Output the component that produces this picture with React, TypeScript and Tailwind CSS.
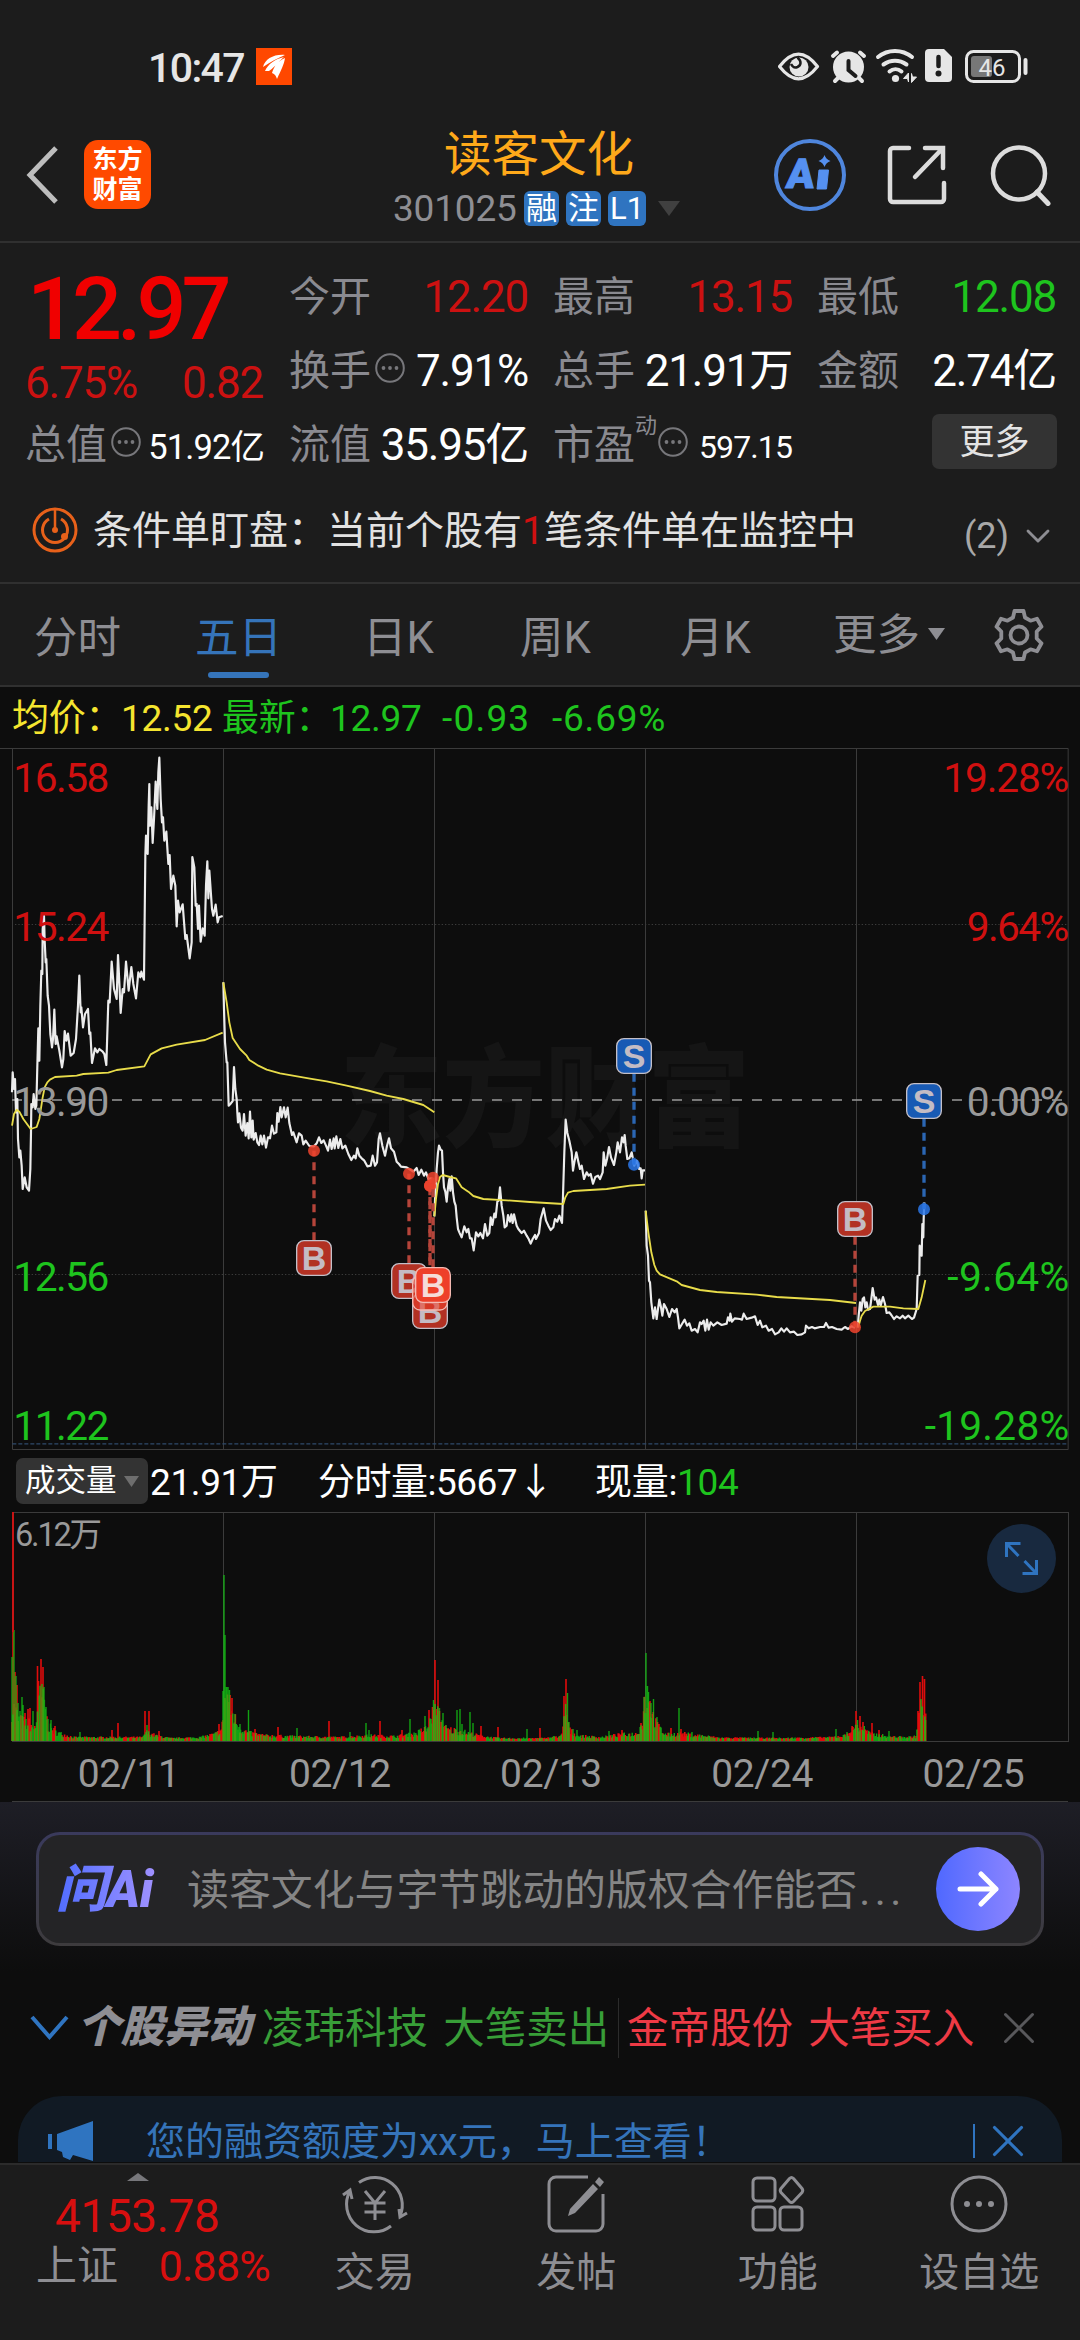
import { ReactNode } from "react";
import { ChevronDown, X } from "lucide-react";

const RED = "#d01010";
const GREEN = "#1ec41e";

/* ---------- status bar ---------- */

function StatusIcons() {
  return (
    <svg width="252" height="38" viewBox="778 47 252 38" fill="none" stroke="#e6e6e6">
      {/* eye */}
      <path d="M779.500 66.500C787 57 792.500 54.200 798.500 54.200s11.500 2.800 19 12.300c-7.500 9.500-13 12.300-19 12.300s-11.500-2.800-19-12.300z" strokeWidth="3.200" strokeLinejoin="round" />
      <circle cx="799" cy="67" r="9.500" fill="#e6e6e6" stroke="none" />
      <path d="M797.500 57.500c4.500 4 3.500 8 0 9.500-2.500 1-5 0-6.500-3" stroke="#1c1c1c" strokeWidth="2.500" />
      {/* alarm clock */}
      <circle cx="848.500" cy="67" r="15.500" fill="#e6e6e6" stroke="none" />
      <path d="M833 56l4-3.500M864 56l-4-3.500M838 78l-3 3M859 78l3 3" strokeWidth="4" strokeLinecap="round" />
      <path d="M848.500 61v9l7 6" stroke="#1c1c1c" strokeWidth="4" strokeLinecap="round" />
      {/* wifi */}
      <path d="M878 57c10-8 24-8 34 0M883.500 64.500c7-5 16-5 23 0M889.500 71.500c3.500-3 8.500-3 12 0" strokeWidth="4" strokeLinecap="round" />
      <circle cx="895.500" cy="78.500" r="3.600" fill="#e6e6e6" stroke="none" />
      <path d="M908.500 82v-9l-5 5.500h4zM911.500 73.500v9l5-5.500h-4z" strokeWidth="1" fill="#e6e6e6" />
      {/* sim warning */}
      <path d="M929 49h15l8 8v21a4 4 0 0 1-4 4h-19a4 4 0 0 1-4-4V53a4 4 0 0 1 4-4z" fill="#e6e6e6" stroke="none" />
      <path d="M938.500 57v9" stroke="#1c1c1c" strokeWidth="4.500" strokeLinecap="round" />
      <circle cx="938.500" cy="73.500" r="3" fill="#1c1c1c" stroke="none" />
      {/* battery */}
      <rect x="966.500" y="51.500" width="53" height="30" rx="7" strokeWidth="3" />
      <rect x="971" y="56" width="21" height="21" rx="3" fill="#777" stroke="none" />
      <path d="M1025.500 60v13" strokeWidth="4" strokeLinecap="round" />
      <text x="992" y="75.500" textAnchor="middle" fontSize="24" fontWeight="400" fill="#e6e6e6" stroke="none">46</text>
    </svg>
  );
}

function StatusBar() {
  return (
    <div className="flex h-[108px] items-start pt-[48px] pr-[50px] pl-[148px]">
      <span className="w-[108px] text-[41px] leading-[41px] font-medium tracking-[-1.600px] text-[#e6e6e6]">10:47</span>
      <svg width="36" height="37" viewBox="0 0 36 37">
        <rect width="36" height="37" fill="#ff4800" />
        <path d="M7 19C9 11 18 6 29 7c-7 3-15 7-22 12zM9 23c3-7 10-12 19-14-5 4-8 9-15 14zM16 25c2-7 6-12 13-15-1 7-4 12-8 21-1-3-2-5-5-6z" fill="#fff" />
      </svg>
      <div className="ml-auto -mt-px">
        <StatusIcons />
      </div>
    </div>
  );
}

/* ---------- title bar ---------- */

function Tag({ children }: { children: ReactNode }) {
  return (
    <span className="flex h-[35px] min-w-[35px] items-center justify-center rounded-[6px] bg-[#2f74c0] px-[2px] pt-px text-[31px] leading-none text-white">
      {children}
    </span>
  );
}

function Header() {
  return (
    <header className="flex h-[135px] items-center border-b-2 border-[#303030] pr-[28px] pl-[25px]">
      <svg width="35" height="60" viewBox="0 0 35 60" fill="none" stroke="#bdbdbd" strokeWidth="5">
        <path d="M31 3 5 30l26 27" />
      </svg>
      <div className="ml-[24px] flex h-[69px] w-[67px] flex-col items-center justify-center rounded-[14px] bg-[#ff4a00] text-[25px] leading-[30px] font-bold text-white">
        <span>东方</span>
        <span>财富</span>
      </div>
      <div className="ml-[242px] flex w-[292px] flex-col pt-[5px]">
        <h1 className="pl-[51px] text-[47.500px] leading-[58px] text-[#ffa91a]">读客文化</h1>
        <div className="mt-[4px] flex h-[40px] items-center gap-[7px]">
          <span className="w-[124px] pt-px text-[37px] tracking-[-0.2px] text-[#8e8e93]">301025</span>
          <Tag>融</Tag>
          <Tag>注</Tag>
          <Tag>L1</Tag>
          <svg className="ml-[5px]" width="22" height="15">
            <path d="M0 0h22L11 15z" fill="#404040" />
          </svg>
        </div>
      </div>
      <div className="ml-auto flex items-center">
        <svg width="74" height="74" viewBox="0 0 74 74">
          <circle cx="37" cy="37" r="34" fill="none" stroke="#4f86dd" strokeWidth="4" />
          <g transform="skewX(-6)">
            <text x="17.500" y="50" fontSize="41" fontWeight="900" fill="#5590f0" stroke="#5590f0">A</text>
          </g>
          <path d="M46 32h9.500l-2 19H44z" fill="#5590f0" strokeLinejoin="round" stroke="#5590f0" />
          <path d="M51.500 17q1.500 4.500 6 6-4.500 1.500-6 6-1.500-4.500-6-6 4.500-1.500 6-6z" fill="#5590f0" />
        </svg>
        <svg className="ml-[40px]" width="60" height="60" viewBox="0 0 60 60" fill="none" stroke="#dcdcdc" strokeWidth="4.500" strokeLinecap="round">
          <path d="M22 3H6a3 3 0 0 0-3 3v48a3 3 0 0 0 3 3h48a3 3 0 0 0 3-3V38M38 3h18v20M55 4 28 32" />
        </svg>
        <svg className="ml-[43px]" width="62" height="62" viewBox="0 0 62 62" fill="none" stroke="#dcdcdc" strokeWidth="4.500">
          <circle cx="29" cy="29.500" r="26" />
          <path d="m47 48 11 11.500" strokeWidth="5" strokeLinecap="round" />
        </svg>
      </div>
    </header>
  );
}

/* ---------- quote ---------- */

function Info() {
  return (
    <svg className="mx-[4px] mb-[7px] shrink-0" width="30" height="30" viewBox="0 0 30 30">
      <circle cx="15" cy="15" r="13.800" fill="none" stroke="#77777b" strokeWidth="2" />
      <g fill="#77777b">
        <circle cx="8.500" cy="15" r="1.900" />
        <circle cx="15" cy="15" r="1.900" />
        <circle cx="21.500" cy="15" r="1.900" />
      </g>
    </svg>
  );
}

interface CellProps {
  label: string;
  value: string;
  color?: string;
  info?: boolean;
  sup?: string;
  small?: string;
}

function Cell({ label, value, color = "text-white", info, sup, small }: CellProps) {
  return (
    <div className="flex h-[74px] w-[239px] items-center whitespace-nowrap">
      <span className="text-[41px] text-[#8a8a90]">{label}</span>
      {sup && <span className="-mr-[3px] mb-[38px] text-[22px] text-[#8a8a90]">{sup}</span>}
      {info && <Info />}
      <span
        className={
          small
            ? `ml-auto pt-[4px] tracking-[-0.9px] ${small} ${color}`
            : `ml-auto text-[44px] tracking-[-1.200px] ${color}`
        }
      >
        {value}
      </span>
    </div>
  );
}

function Quote() {
  return (
    <section className="flex h-[236px] gap-[25px] pt-[17px] pl-[25px]">
      <div className="w-[239px]">
        <div className="flex h-[98px] items-center pl-[2px] text-[88px] leading-none font-medium tracking-[-5px] text-[#f00000]">12.97</div>
        <div className="flex h-[50px] items-center justify-between pr-px text-[44px] tracking-[-1.200px] text-[#cc1111]">
          <span>6.75%</span>
          <span>0.82</span>
        </div>
        <Cell label="总值" info small="text-[34.500px]" value="51.92亿" />
      </div>
      <div>
        <Cell label="今开" value="12.20" color="text-[#cc1111]" />
        <Cell label="换手" info value="7.91%" />
        <Cell label="流值" value="35.95亿" />
      </div>
      <div>
        <Cell label="最高" value="13.15" color="text-[#cc1111]" />
        <Cell label="总手" value="21.91万" />
        <Cell label="市盈" sup="动" info small="text-[32px]" value="597.15" />
      </div>
      <div>
        <Cell label="最低" value="12.08" color="text-[#1ec41e]" />
        <Cell label="金额" value="2.74亿" />
        <button className="mt-[6px] ml-[115px] flex h-[55px] w-[125px] items-center justify-center rounded-[7px] bg-[#333] pt-[2px] text-[35px] text-[#e4e4e4]">
          更多
        </button>
      </div>
    </section>
  );
}

function AlertRow() {
  return (
    <div className="flex h-[105px] items-center border-b-2 border-[#303030] pr-[29px] pb-[2px] pl-[32px]">
      <svg width="46" height="46" viewBox="0 0 46 46" fill="none" stroke="#e8611a" strokeWidth="3">
        <circle cx="23" cy="23" r="21" />
        <path d="M17 12a12.500 12.500 0 1 0 12 0" />
        <path d="M23 2v20" strokeWidth="2.500" />
        <circle cx="23" cy="23" r="3" fill="#e8611a" stroke="none" />
        <circle cx="32.500" cy="29.500" r="3.500" fill="#e8611a" stroke="none" />
      </svg>
      <p className="mt-[3px] ml-[15px] text-[39px] whitespace-nowrap text-[#e2e2e2]">
        条件单盯盘：当前个股有<span className="text-[#d01010]">1</span>笔条件单在监控中
      </p>
      <span className="mt-[12px] ml-auto text-[36px] text-[#a8a8a8]">(2)</span>
      <ChevronDown className="mt-[12px] -mr-[7px] ml-[9px] h-[40px] w-[40px] text-[#8e8e93]" strokeWidth={1.700} />
    </div>
  );
}

/* ---------- period tabs ---------- */

const tabs = [
  { name: "分时", width: "w-[161px]" },
  { name: "五日", width: "w-[168px]", active: true },
  { name: "日K", width: "w-[157px]" },
  { name: "周K", width: "w-[160px]" },
  { name: "月K", width: "w-[153px]" },
];

function Tabs() {
  return (
    <nav className="flex h-[103px] items-center border-b-2 border-[#303030] pl-[34px] text-[43.500px] text-[#8e8e93]">
      {tabs.map((tab) => (
        <div key={tab.name} className={`${tab.width} flex h-full flex-col pt-[23px]`}>
          <span className={tab.active ? "leading-[64px] text-[#3574ba]" : "leading-[64px]"}>{tab.name}</span>
          {tab.active && <span className="mt-px ml-[13px] h-[6px] w-[61px] rounded-full bg-[#3574ba]" />}
        </div>
      ))}
      <span className="mt-[3px]">更多</span>
      <svg className="mb-[2px] ml-[8px]" width="17" height="12">
        <path d="M0 0h17L8.500 12z" fill="#8e8e93" />
      </svg>
      <svg className="ml-[48px]" width="52" height="54" viewBox="0 0 52 54" fill="none" stroke="#8e8e93" strokeWidth="3.800" strokeLinejoin="round">
        <path d="M21.500 3h9l1.500 6.500 5.500 3.200 6.500-2 4.500 8-4.800 4.800v7l4.800 4.800-4.500 8-6.500-2-5.500 3.200-1.500 6.500h-9L20 44.500l-5.500-3.200-6.500 2-4.500-8 4.800-4.800v-7l-4.800-4.800 4.500-8 6.500 2L20 9.500z" />
        <circle cx="26" cy="27" r="8.500" />
      </svg>
    </nav>
  );
}

/* ---------- price chart ---------- */

// Plot units are thirds of a pixel.
const priceLines = [
  {
    shift: "translate(0 0)",
    price:
      "36,1060 38,1000 42,1050 45,1020 48,1120 52,1080 54,1200 58,1255 61,1235 65,1280 68,1350 74,1315 80,1345 87,1355 91,1290 93,1180 94,1095 98,1105 101,1065 106,1110 109,1100 112,980 115,868 118,965 121,800 124,695 127,705 128,570 132,530 134,605 137,670 139,660 143,770 147,800 151,885 156,925 159,900 163,812 167,915 170,892 178,935 186,985 190,960 194,876 199,905 204,884 212,950 221,942 228,900 234,800 238,710 242,820 244,805 249,865 255,825 264,810 268,885 271,880 276,972 285,928 292,940 298,930 308,938 313,945 319,978 325,785 329,790 335,668 342,750 350,780 354,648 358,730 362,822 368,750 372,760 378,668 386,755 394,684 400,735 408,778 415,700 421,715 424,698 432,722 436,350 438,290 443,345 446,200 448,135 450,260 454,205 458,312 462,240 467,128 472,210 475,100 478,56 482,180 486,250 489,235 493,305 499,278 505,375 509,348 513,450 520,410 526,440 530,562 534,485 539,520 548,496 556,600 560,588 569,658 575,610 577,354 583,385 587,500 590,495 594,570 597,500 602,608 608,568 614,590 618,440 622,367 625,478 628,395 636,510 640,530 647,497 653,550 657,535 668,531",
    avg: "36,1160 42,1125 50,1112 58,1118 70,1140 92,1170 110,1164 118,1140 128,1075 134,1045 142,1030 150,1022 165,1014 230,1010 250,1005 325,1001 350,993 433,982 452,946 485,928 530,917 615,903 668,881",
  },
  {
    shift: "translate(660 720)",
    price:
      "10,10 12,90 15,190 20,250 22,250 26,380 32,374 38,366 42,264 46,330 50,360 52,400 54,430 58,403 63,446 68,455 72,405 77,470 82,432 86,478 90,398 94,475 98,425 101,482 107,462 112,490 117,498 122,470 127,496 132,470 138,506 144,475 150,478 156,440 162,464 169,460 172,402 176,428 181,384 185,415 192,385 197,415 203,386 208,432 216,468 220,460 230,490 237,463 245,470 250,496 257,485 268,501 282,502 290,493 297,475 304,492 311,484 318,500 324,515 330,482 335,510 341,478 344,508 349,472 355,507 361,480 367,508 376,500 385,525 394,543 402,530 407,538 412,508 418,530 425,538 433,545 442,562 452,560 458,530 465,560 471,550 476,480 480,463 487,500 495,530 501,500 507,478 513,508 522,518 530,548 537,555 543,563 560,565 580,578 590,567 596,588 604,572 612,590 618,580 625,600 632,598 640,600",
    avg: "10,10 20,70 28,130 38,177 60,210 80,230 88,243 115,260 140,272 180,283 270,299 320,307 380,320 450,336 500,350 550,360 610,378 643,400",
  },
  {
    shift: "translate(660 720)",
    price:
      "643,712 646,640 650,570 654,520 657,500 662,512 666,515 669,580 672,625 676,638 680,668 684,625 688,600 691,635 695,592 699,640 703,668 707,680 710,715 714,750 718,760 725,775 733,742 740,760 745,750 750,778 755,778 761,814 768,760 775,772 781,762 789,778 795,735 802,770 808,762 812,715 817,738 823,704 827,715 832,668 836,665 840,625 845,680 850,710 854,745 860,740 864,708 870,728 874,706 878,732 882,706 890,740 895,750 905,762 912,755 920,770 926,780 932,794 938,780 945,768 948,780 957,762 962,720 971,688 978,725 985,740 992,753 1000,745 1005,720 1012,728 1018,710 1026,732 1029,650 1033,520 1037,422 1042,462 1048,485 1055,520 1059,575 1063,550 1069,520 1075,548 1080,570 1085,560 1092,600 1100,580 1106,590 1112,585 1119,614 1126,594 1134,590 1140,600 1148,580 1151,520 1156,560 1161,540 1167,504 1173,535 1182,558 1189,520 1193,490 1200,520 1206,475 1211,490 1214,468 1217,500 1222,540 1228,538 1235,520 1243,560 1250,545 1257,570 1262,568 1265,598 1268,574 1275,574",
    avg: "643,712 648,660 654,615 660,594 668,588 690,594 708,598 725,625 745,638 760,651 790,660 860,664 930,669 1030,675 1036,655 1044,641 1060,636 1160,630 1230,620 1275,617",
  },
  {
    shift: "translate(1920 720)",
    price:
      "17,695 20,800 24,830 27,905 30,910 34,970 40,1018 45,985 50,1020 54,990 58,962 63,985 67,1010 72,975 80,990 88,1014 96,990 104,1000 110,990 114,1015 118,1048 126,1035 134,1022 141,1040 148,1033 155,1055 165,1050 173,1060 180,1030 185,1035 191,1025 196,1055 201,1022 206,1052 212,1030 220,1040 232,1030 245,1038 260,1034 264,1015 269,1025 271,1004 276,1028 284,1018 300,1020 306,1022 311,1004 320,1020 335,1016 345,1012 353,1038 360,1025 367,1045 378,1040 386,1055 396,1050 405,1066 416,1060 424,1048 432,1058 440,1048 450,1060 462,1058 472,1068 485,1066 495,1060 498,1040 506,1048 516,1044 524,1048 540,1044 552,1044 558,1032 566,1046 576,1044 590,1050 605,1052 615,1044 624,1050 634,1042 645,1046",
    avg: "17,695 25,760 34,820 43,858 50,875 60,886 110,907 125,918 180,933 230,939 350,947 410,954 570,963 648,972",
  },
  {
    shift: "translate(1920 720)",
    price:
      "653,1046 656,1010 660,970 664,995 668,960 672,955 676,985 680,970 684,992 690,990 694,960 698,927 704,962 708,955 714,978 718,962 722,980 729,954 735,975 740,1002 748,1000 754,1008 762,1020 770,1012 780,1018 788,1010 795,1018 805,1010 816,1020 822,1016 830,990 833,890 838,888 839,800 845,830 847,735 850,775 851,720 853,670",
    avg: "655,1045 660,1025 665,1010 675,996 700,983 750,983 790,988 835,990 845,955 856,903",
  },
];

interface TradeProps {
  kind: "B" | "S";
  x: number;
  dot: number;
  badge: number;
  bright?: boolean;
  plain?: boolean;
}

// Buy and sell marks: a dot on the line, a dashed stem and a lettered badge.
// A plain badge lies under another one, so its letter is left out.
const trades: TradeProps[] = [
  { kind: "B", x: 942, dot: 1235, badge: 1557 },
  { kind: "B", x: 1227, dot: 1304, badge: 1626 },
  { kind: "B", x: 1290, dot: 1340, badge: 1716 },
  { kind: "B", x: 1290, dot: 1340, badge: 1661, bright: true, plain: true },
  { kind: "B", x: 1299, dot: 1316, badge: 1638, bright: true },
  { kind: "S", x: 1902, dot: 1277, badge: 951 },
  { kind: "B", x: 2565, dot: 1765, badge: 1440 },
  { kind: "S", x: 2772, dot: 1411, badge: 1086 },
];

function Trade({ kind, x, dot, badge, bright, plain }: TradeProps) {
  const fill = kind === "S" ? "#185ab4" : bright ? "#ee402a" : "#b23123";
  const stem = kind === "S" ? "#2b66b3" : "#b5443a";
  const edge = badge > dot ? badge - 53 : badge + 53;
  return (
    <g>
      <path d={`M${x} ${edge}V${dot}`} stroke={stem} strokeWidth="10" strokeDasharray="24 18" />
      <circle cx={x} cy={dot} r="18" fill={kind === "S" ? "#2b78ea" : "#f0442e"} fillOpacity="0.85" />
      <rect
        x={x - 52}
        y={badge - 52}
        width="104"
        height="104"
        rx="22"
        fill={fill}
        fillOpacity={plain ? 0.6 : 1}
        stroke={bright ? "#f3b9b2" : "#c3bfc8"}
        strokeWidth="4"
      />
      {!plain && (
        <text x={x} y={badge + 37} textAnchor="middle" fontSize="102" fontWeight="700" fill={bright ? "#f5dcd9" : "#c4bcc4"} fontFamily="Liberation Sans, sans-serif">
          {kind}
        </text>
      )}
    </g>
  );
}

const priceLabels = [
  { y: 160, price: "16.58", pct: "19.28%", width: 378, fill: RED },
  { y: 606, price: "15.24", pct: "9.64%", width: 308, fill: RED },
  { y: 1132, price: "13.90", pct: "0.00%", width: 308, fill: "#999" },
  { y: 1657, price: "12.56", pct: "-9.64%", width: 366, fill: GREEN },
  { y: 2102, price: "11.22", pct: "-19.28%", width: 434, fill: GREEN },
];

function PriceChart() {
  return (
    <svg width="1080" height="704" viewBox="0 27 3240 2112" fill="none">
      <text x="1020" y="1196" fontSize="330" fontWeight="900" textLength="1230" lengthAdjust="spacingAndGlyphs" fill="#151515">
        东方财富
      </text>
      <g stroke="#3b3b3b" strokeWidth="3">
        <path d="M0 28.500H3204M37.500 28v2103M670.500 28v2103M1303.500 28v2103M1936.500 28v2103M2569.500 28v2103M3204.500 28v2103M37 2131.500H3205" />
        <path d="M45 556.500H3204M45 1606.500H3204" strokeDasharray="4 6" />
      </g>
      <path d="M37 2114.500H3200" stroke="#2f4a6b" strokeWidth="4" strokeDasharray="12 6" />
      <path d="M36 1083H3190" stroke="#999" strokeWidth="5" strokeDasharray="30 30" />
      {priceLines.map((day, i) => (
        <g key={i} transform={day.shift} strokeLinejoin="round">
          <polyline points={day.price} stroke="#ececec" strokeWidth="6.500" />
          <polyline points={day.avg} stroke="#e8dc4a" strokeWidth="5.500" />
        </g>
      ))}
      {trades.map((trade, i) => (
        <Trade key={i} {...trade} />
      ))}
      {priceLabels.map((row) => (
        <g key={row.price} fontSize="122" fill={row.fill}>
          <text x="40" y={row.y} textLength="288">{row.price}</text>
          <text x={3208 - row.width} y={row.y} textLength={row.width}>{row.pct}</text>
        </g>
      ))}
    </svg>
  );
}

/* ---------- volume chart ---------- */

// [x, height, colour] of the bars that stand out
const peaks: [number, number, "r" | "g"][] = [
  [12, 84, "g"], [13, 229, "r"], [14, 111, "g"], [15, 69, "r"], [16, 65, "g"], [17, 56, "r"], [18, 38, "g"],
  [20, 30, "g"], [22, 44, "g"], [23, 36, "g"], [25, 28, "r"], [28, 32, "r"], [30, 33, "r"], [33, 30, "g"], [37.500, 75, "r"],
  [38.500, 60, "r"], [41, 82, "r"], [43, 74, "r"], [42, 57, "g"], [44, 54, "g"], [46, 34, "g"], [48, 22, "g"], [51, 21, "g"],
  [55, 15, "r"], [80, 9, "g"], [112, 11, "r"], [118, 18, "r"], [145, 30, "r"], [149, 30, "r"], [147, 16, "g"], [159, 10, "r"],
  [219, 17, "r"], [223, 50, "g"], [224, 166, "g"], [225, 106, "g"], [226.500, 54, "g"], [228, 54, "g"], [229.500, 51, "g"],
  [232, 43, "r"], [235, 27, "g"], [240, 17, "g"], [248.500, 31, "g"], [255, 12, "r"], [278, 14, "r"], [297, 13, "g"],
  [329, 20, "r"], [350, 9, "g"], [366, 18, "g"], [369, 11, "g"], [380, 20, "r"], [402, 11, "r"], [410, 22, "g"], [425, 25, "g"],
  [429, 31, "r"], [431, 22, "g"], [433.500, 41, "g"], [435, 81, "r"], [438, 61, "r"], [439.500, 33, "g"], [443, 28, "g"],
  [446, 16, "g"], [457, 31, "g"], [460, 32, "g"], [462, 17, "g"], [470, 29, "g"], [473, 18, "g"], [481, 15, "r"], [498, 14, "r"],
  [527, 12, "g"], [540, 13, "r"], [564, 45, "r"], [566, 62, "r"], [567.500, 48, "g"], [569, 19, "g"], [573, 12, "g"], [577, 11, "g"],
  [609, 10, "g"], [622, 11, "r"], [641, 18, "r"], [644, 44, "g"], [646, 88, "g"], [647.500, 55, "g"], [648.500, 49, "g"],
  [650, 40, "r"], [651, 38, "g"], [653.500, 42, "g"], [657, 24, "g"], [659, 17, "r"], [671, 13, "r"], [679, 33, "g"], [681, 12, "r"],
  [692, 9, "g"], [758, 10, "g"], [773, 9, "g"], [836, 12, "g"], [847, 9, "g"], [852, 13, "r"], [856, 30, "r"], [857.500, 21, "g"],
  [860, 25, "r"], [863, 19, "r"], [872, 18, "r"], [879, 11, "r"], [889, 10, "g"], [918, 30, "r"], [920, 59, "r"], [922.500, 65, "r"],
  [924.500, 62, "r"], [921, 42, "g"], [925.500, 21, "g"],
];

// average height of the ordinary bars along the axis
const base = [
  [12, 40], [20, 22], [30, 18], [36, 14], [38, 50], [44, 44], [48, 16], [56, 9], [64, 6], [74, 3], [110, 3], [143, 3], [146, 9],
  [156, 5], [170, 2], [200, 3], [216, 7], [222, 12], [224, 50], [228, 46], [234, 26], [240, 14], [248, 8], [265, 5], [290, 4], [340, 3],
  [370, 5], [395, 4], [415, 7], [428, 14], [434, 34], [440, 26], [446, 12], [462, 10], [470, 7], [484, 4], [500, 2], [545, 2],
  [562, 5], [566, 40], [569, 12], [576, 5], [600, 3], [620, 6], [636, 7], [642, 18], [645, 48], [650, 36], [657, 16], [666, 6],
  [682, 7], [700, 5], [720, 2.5], [780, 2], [830, 3], [845, 5], [855, 15], [863, 14], [870, 7], [890, 4], [905, 3], [916, 4],
  [920, 36], [926, 24],
];

function baseAt(x: number) {
  const i = base.findIndex(([bx]) => bx >= x);
  if (i <= 0) return base[0][1];
  const [x0, y0] = base[i - 1];
  const [x1, y1] = base[i];
  return y0 + ((y1 - y0) * (x - x0)) / (x1 - x0);
}

function buildBars() {
  let seed = 7;
  const rand = () => {
    seed = (seed * 16807) % 2147483647;
    return seed / 2147483647;
  };
  const paths = { r: "", g: "" };
  for (let x = 12; x < 926; x += 0.876) {
    const height = baseAt(x) * (0.45 + rand() * 0.75) + 1;
    paths[rand() > 0.5 ? "r" : "g"] += `M${x.toFixed(1)} 229v-${height.toFixed(1)}`;
  }
  for (const [x, height, color] of peaks) {
    paths[color] += `M${x} 229v-${height}`;
  }
  return paths;
}

const bars = buildBars();

function VolumeChart() {
  return (
    <svg width="1080" height="232" viewBox="0 0 1080 232" fill="none">
      <path d="M12 .5h1056M223.500 0v230M434.500 0v230M645.500 0v230M856.500 0v230M1068.500 0v230M12 229.500h1056" stroke="#3b3b3b" />
      <path d={bars.r} stroke="#e00c0c" strokeWidth="1.600" />
      <path d={bars.g} stroke="#14c814" strokeWidth="1.400" strokeOpacity="0.8" />
      <path d="M13 0v120" stroke="#c81414" strokeWidth="2" />
      <text x="15" y="33.500" fontSize="32.500" textLength="87" fill="#999">6.12万</text>
      <circle cx="1021.500" cy="46.500" r="34.500" fill="#18293f" />
      <path d="M1006.500 45v-13.500h14M1007 32l11.500 12M1036.500 48v13.500h-14M1036 61l-11.500-12" stroke="#2f74c0" strokeWidth="3" />
    </svg>
  );
}

function Charts() {
  return (
    <section className="bg-[#0d0d0d]">
      <div className="flex h-[61px] items-center pt-[2px] pl-[12px] text-[37px] tracking-[-0.3px] whitespace-nowrap text-[#1ec41e]">
        <span className="w-[109px] text-[#f5e52f]">均价：</span>
        <span className="w-[101px] text-[#f5e52f]">12.52</span>
        <span className="w-[108px]">最新：</span>
        <span className="w-[112px]">12.97</span>
        <span className="w-[110px] tracking-[1.200px]">-0.93</span>
        <span className="tracking-[0.8px]">-6.69%</span>
      </div>
      <PriceChart />
      <div className="-mt-[3px] flex h-[63px] items-center pl-[16px] text-[37px] whitespace-nowrap text-white">
        <div className="flex h-[46px] w-[132px] items-center rounded-[7px] bg-[#333] pt-px pl-[9px] text-[30.500px]">
          成交量
          <svg className="ml-[7px]" width="15" height="11">
            <path d="M0 0h15L7.500 11z" fill="#6e6e6e" />
          </svg>
        </div>
        <span className="ml-[2px] w-[168px] pt-[3px] tracking-[-0.4px]">21.91万</span>
        <span className="w-[277px] pt-[3px] tracking-[-0.5px]">分时量:5667↓</span>
        <span className="pt-[3px] tracking-[-0.3px]">
          现量:<span className="text-[#1ec41e]">104</span>
        </span>
      </div>
      <VolumeChart />
      <div className="ml-[12px] grid h-[58px] w-[1056px] grid-cols-5 border-b border-[#3b3b3b] text-[39px] leading-[60px] text-[#999]">
        {["02/11", "02/12", "02/13", "02/24", "02/25"].map((date) => (
          <span key={date} className="pl-[22px] text-center tracking-[-0.4px]">{date}</span>
        ))}
      </div>
    </section>
  );
}

/* ---------- below the charts ---------- */

function AskBar() {
  return (
    <section className="flex h-[170px] flex-col bg-linear-to-b from-[#1e1e26] to-[#0d0d0d] px-[36px] pt-[30px]">
      <div className="rounded-[24px] bg-linear-to-b from-[#3a3a5c] to-[#3d3b3d] p-[3px]">
        <div className="flex h-[108px] items-center rounded-[21px] bg-[#242426] pr-[21px] pl-[17px]">
          <span className="w-[131px] bg-linear-to-r from-[#4f6cff] from-0% to-[#a493ff] to-80% bg-clip-text py-[6px] text-[51px] font-black tracking-[-0.5px] text-transparent italic">
            问Ai
          </span>
          <span className="flex pt-[3px] text-[41.900px] whitespace-nowrap text-[#858585]">
            读客文化与字节跳动的版权合作能否<span className="ml-[2px] tracking-[4.500px]">...</span>
          </span>
          <span className="ml-auto flex h-[84px] w-[84px] items-center justify-center rounded-full bg-linear-to-r from-[#4f68ff] to-[#8d85ff]">
            <svg width="42" height="38" viewBox="0 0 42 38" fill="none" stroke="#fff" strokeWidth="5" strokeLinecap="round" strokeLinejoin="round">
              <path d="M3 19h36M24 4l15 15-15 15" />
            </svg>
          </span>
        </div>
      </div>
    </section>
  );
}

function Movers() {
  return (
    <div className="flex h-[110px] items-center pt-px pl-[30px] text-[41.500px] whitespace-nowrap">
      <svg width="39" height="26" viewBox="0 0 39 26" fill="none" stroke="#2f74c0" strokeWidth="4">
        <path d="m2 2 17.500 20L37 2" />
      </svg>
      <span className="ml-[8px] w-[185px] text-[43.500px] font-black text-[#8e8e93] italic">个股异动</span>
      <span className="w-[356px] pt-[2px] text-[#389e38]">凌玮科技 <span className="ml-[5px]">大笔卖出</span></span>
      <span className="h-[60px] w-px bg-[#2c2c2c]" />
      <span className="ml-[8px] w-[371px] pt-[2px] text-[#ee3a45]">金帝股份 <span className="ml-[5px]">大笔买入</span></span>
      <X className="-ml-[6px] h-[54px] w-[54px] text-[#58585b]" strokeWidth={1.300} />
    </div>
  );
}

function Banner() {
  return (
    <div className="mx-[18px] mt-[14px] h-[66px] overflow-hidden rounded-t-[44px] bg-[#111a24]">
      <div className="flex h-[90px] items-center pl-[30px] text-[39px] text-[#3574ba]">
        <svg width="46" height="42" viewBox="0 0 46 42" fill="#2f74c0">
          <path d="M0 14h4v15H0zM9 14 45 1v40l-20-6-3 5-7-3-1-5-5-2z" />
        </svg>
        <span className="ml-[52px] pt-[2px] whitespace-nowrap">您的融资额度为xx元，马上查看！</span>
        <span className="ml-auto h-[34px] w-[2px] bg-[#2f74c0]" />
        <X className="mr-[27px] ml-[6px] h-[54px] w-[54px] text-[#2f74c0]" strokeWidth={1.400} />
      </div>
    </div>
  );
}

/* ---------- bottom bar ---------- */

function NavItem({ label, children }: { label: string; children: ReactNode }) {
  return (
    <div className="flex w-[201.500px] flex-col items-center pt-[9px]">
      <svg width="66" height="60" viewBox="0 0 66 60" fill="none" stroke="#8e8e93" strokeWidth="3">
        {children}
      </svg>
      <span className="mt-[11px] text-[40px] leading-[56px]">{label}</span>
    </div>
  );
}

function BottomBar() {
  return (
    <footer className="flex h-[177px] border-t-2 border-[#2b2b2b] bg-[#1c1c1c] text-[#8e8e93]">
      <div className="flex w-[274px] flex-col pt-[8px] text-[43px] tracking-[-0.8px] text-[#d80f0f]">
        <svg className="ml-[127px]" width="22" height="8">
          <path d="M0 8 11 0l11 8z" fill="#77777b" />
        </svg>
        <span className="mt-[10px] ml-[55px] text-[46px] leading-[50px] tracking-[-0.4px]">4153.78</span>
        <div className="flex items-center justify-between pr-[4px] pl-[36px] leading-[50px]">
          <span className="text-[41px] tracking-normal text-[#8e8e93]">上证</span>
          <span>0.88%</span>
        </div>
      </div>
      <NavItem label="交易">
        <path d="M17 8.500A27.500 27.500 0 0 1 58 42M49 52A27.500 27.500 0 0 1 8 17M1 21l7-5 2 9M65 39l-7 4-1-8" />
        <path d="m23 17 10 12 10-12M22.500 29h21M22.500 38h21M33 29v17" />
      </NavItem>
      <NavItem label="发帖">
        <path d="M45 3H13a7 7 0 0 0-7 7v40a7 7 0 0 0 7 7h40a7 7 0 0 0 7-7V20" />
        <path d="m56 3 5 5-4 5-5-5zM50 10l5 5-23 24-7 3 2-7z" fill="#8e8e93" stroke="none" />
      </NavItem>
      <NavItem label="功能">
        <rect x="8" y="4" width="22" height="23" rx="4" />
        <rect x="8" y="33" width="22" height="23" rx="4" />
        <rect x="35" y="33" width="22" height="23" rx="4" />
        <path d="M44.500 4.500q2-2 4 0l8.500 10q1.500 2 0 4l-8.500 9q-2 2-4 0l-8.500-9q-1.500-2 0-4z" />
      </NavItem>
      <NavItem label="设自选">
        <circle cx="33" cy="30" r="27" />
        <g fill="#8e8e93" stroke="none">
          <circle cx="21" cy="30" r="3" />
          <circle cx="33" cy="30" r="3" />
          <circle cx="45" cy="30" r="3" />
        </g>
      </NavItem>
    </footer>
  );
}

export default function App() {
  return (
    <div className="flex h-[2340px] w-[1080px] flex-col overflow-hidden bg-[#1c1c1c] leading-none [font-family:Roboto,'Noto_Sans_CJK_SC',sans-serif]">
      <StatusBar />
      <Header />
      <Quote />
      <AlertRow />
      <Tabs />
      <Charts />
      <div className="flex flex-1 flex-col bg-[#0d0d0d]">
        <AskBar />
        <Movers />
        <Banner />
      </div>
      <BottomBar />
    </div>
  );
}
